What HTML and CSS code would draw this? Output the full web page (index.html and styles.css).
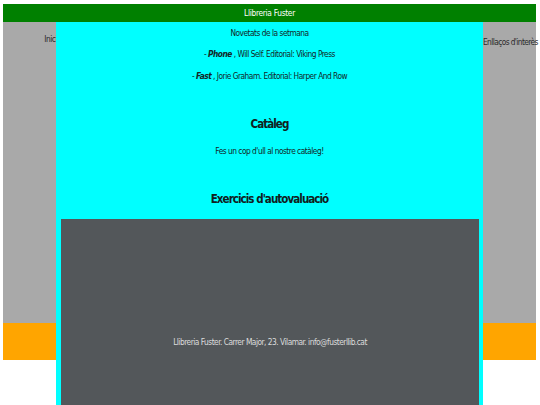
FILE: index.html
```html
<!DOCTYPE html>
<html lang="ca">
<head>
<meta charset="utf-8">
<title>Llibreria Fuster</title>
<link rel="stylesheet" href="styles.css">
</head>
<body>
<div class="page">
  <header class="top">Llibreria Fuster</header>
  <nav class="aside aside-left"><span>Inici</span></nav>
  <main class="main">
    <section class="news">
      <p class="line">Novetats de la setmana</p>
      <p class="line">- <b><i>Phone</i></b> , Will Self. Editorial: Viking Press</p>
      <p class="line">- <b><i>Fast</i></b> , Jorie Graham. Editorial: Harper And Row</p>
    </section>
    <h2 class="title title-cat">Catàleg</h2>
    <p class="line line-cat">Fes un cop d'ull al nostre catàleg!</p>
    <h2 class="title title-ex">Exercicis d'autovaluació</h2>
    <div class="box">Llibreria Fuster. Carrer Major, 23. Vilamar. info@fusterllib.cat</div>
  </main>
  <aside class="aside aside-right"><span>Enllaços d'interès</span></aside>
  <footer class="foot"></footer>
</div>
</body>
</html>
```
FILE: styles.css
```css
html, body {
  margin: 0;
  padding: 0;
  background: #ffffff;
  overflow: hidden;
}
body {
  padding: 4px 4px 0 3px;
  font-family: "DejaVu Sans Condensed", "Liberation Sans", sans-serif;
  font-size: 8.3px;
  letter-spacing: -0.5px;
  color: #142626;
}
.page {
  display: grid;
  grid-template-columns: 53px 427px 53px;
  grid-template-rows: 18px 301px 37px auto;
}
.top {
  grid-column: 1 / 4;
  grid-row: 1;
  background: #008000;
  color: #ffffff;
  text-align: center;
  line-height: 18px;
  letter-spacing: -0.3px;
}
.aside {
  grid-row: 2;
  background: #a9a9a9;
  color: #2a2a2a;
  white-space: nowrap;
}
.aside-left {
  grid-column: 1;
  text-align: right;
  padding-top: 11px;
  line-height: 12px;
  margin-right: -1px;
}
.aside-right {
  grid-column: 3;
  text-align: left;
  padding-top: 14px;
  line-height: 12px;
  letter-spacing: -0.6px;
}
.foot {
  grid-column: 1 / 4;
  grid-row: 3;
  background: #ffa500;
}
.main {
  grid-column: 2;
  grid-row: 2 / 5;
  z-index: 1;
  background: #00ffff;
  text-align: center;
  padding-bottom: 40px;
}
.news {
  padding-top: 0.5px;
}
.line {
  margin: 0;
  line-height: 21.5px;
}
.title {
  margin: 0;
  font-size: 11.5px;
  font-weight: bold;
  line-height: 20px;
  letter-spacing: -0.95px;
  color: #102020;
}
.title-cat {
  margin-top: 27px;
}
.line-cat {
  margin-top: 7px;
  line-height: 20px;
}
.title-ex {
  margin-top: 28px;
}
.box {
  margin: 10px 4px 0 5px;
  padding: 113px 0 112px;
  line-height: 20px;
  background: #53575a;
  color: #dcdcdc;
}
```
